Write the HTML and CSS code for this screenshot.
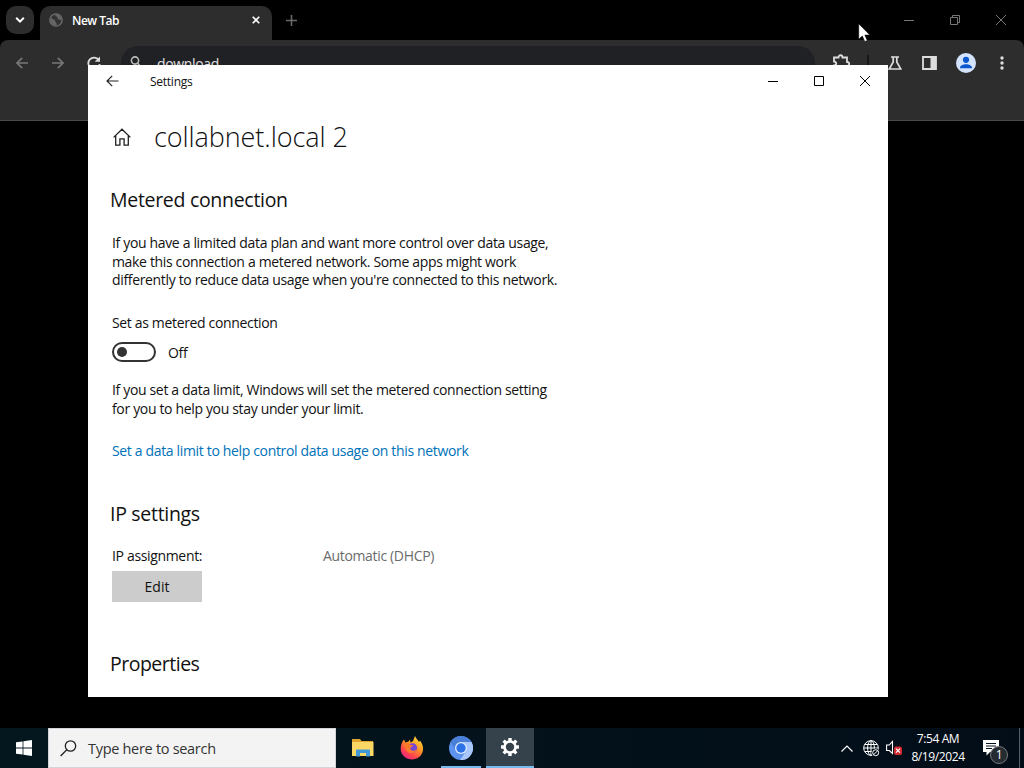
FILE: index.html
```
<!DOCTYPE html>
<html lang="en">
<head>
  <meta charset="UTF-8">
  <meta name="viewport" content="width=device-width, initial-scale=1.0">
  <title>Settings</title>
  <link rel="stylesheet" href="styles.css">
</head>
<body>
  <div class="desktop">

    <!-- browser -->
    <div class="browser">
      <div class="tabstrip">
        <div class="tab-search">
          <svg width="10" height="8" viewBox="0 0 10 8"><path d="M1.2 1.8 5 5.6 8.8 1.8" fill="none" stroke="#fff" stroke-width="2"/></svg>
        </div>
        <div class="tab">
          <svg width="14" height="14" viewBox="0 0 14 14"><circle cx="7" cy="7" r="6.2" fill="#333" stroke="#6e6e6e" stroke-width="1.3"/><path d="M2 4.5C4 7 6 6 6.2 8.3 6.3 9.5 8 9.6 7.8 12.6 5 13 2 11 1.3 7.5zM6 1.5c0 2 3 1.6 2.3 3.8C9.5 6 10.5 7.5 12.5 7 12.5 4 10.5 1.5 8 1.2z" fill="#666"/></svg>
          <span class="tab-title">New Tab</span>
          <svg class="tab-close" width="8" height="8" viewBox="0 0 8 8"><path d="M.7.7l6.6 6.6M7.3.7.7 7.3" stroke="#fff" stroke-width="1.6"/></svg>
        </div>
        <svg class="new-tab" width="11" height="11" viewBox="0 0 11 11"><path d="M5.5 0v11M0 5.5h11" stroke="#6a6a6a" stroke-width="1.6"/></svg>
        <div class="browser-controls">
          <svg width="10" height="10" viewBox="0 0 10 10"><path d="M0 5.5h10" stroke="#777"/></svg>
          <svg width="10" height="10" viewBox="0 0 10 10"><path d="M.5 2.5h7v7h-7zM2.5 2.5v-2h7v7h-2" fill="none" stroke="#777"/></svg>
          <svg width="10" height="10" viewBox="0 0 10 10"><path d="M0 0l10 10M10 0 0 10" stroke="#777"/></svg>
        </div>
      </div>
      <div class="toolbar">
        <svg width="12" height="12" viewBox="0 0 12 12"><path d="M12 6H1.2M6.2.8 1 6l5.2 5.2" fill="none" stroke="#777" stroke-width="1.7"/></svg>
        <svg width="12" height="12" viewBox="0 0 12 12"><path d="M0 6h10.8M5.8.8 11 6l-5.2 5.2" fill="none" stroke="#777" stroke-width="1.7"/></svg>
        <svg class="reload" width="14" height="14" viewBox="0 0 14 14"><path d="M12 4.5A5.7 5.7 0 1 0 12.7 8" fill="none" stroke="#ddd" stroke-width="1.8"/><path d="M13 .5v5.3H7.7z" fill="#ddd"/></svg>
        <div class="omnibox">
          <svg width="16" height="16" viewBox="0 0 16 16"><circle cx="8" cy="5.5" r="3.6" fill="none" stroke="#bbb" stroke-width="1.6"/><path d="M10.5 8l4 5" stroke="#bbb" stroke-width="1.6"/></svg>
          <span>download</span>
        </div>
        <div class="tools">
          <svg width="18" height="18" viewBox="0 0 18 18"><path d="M2 16v-4.500c3 0 3-4 0-4v-4h4.500c0-3 4-3 4 0H15v4.500c3 0 3 4 0 4V16z" fill="none" stroke="#ddd" stroke-width="1.8"/></svg>
          <span class="divider"></span>
          <svg class="labs" width="14" height="14" viewBox="0 0 14 14"><path d="M3 1h8M5.2 1v5l-4 7h11.600l-4-7V1" fill="none" stroke="#ddd" stroke-width="1.7"/></svg>
          <svg class="panel" width="15" height="14" viewBox="0 0 15 14"><path d="M1 1h13v12H1z" fill="none" stroke="#ddd" stroke-width="1.8"/><path d="M8.500 1H14v12H8.500z" fill="#ddd"/></svg>
          <svg class="profile" width="20" height="20" viewBox="0 0 20 20"><circle cx="10" cy="10" r="10" fill="#d3e3fd"/><circle cx="10" cy="6.800" r="3.100" fill="#0b57d0"/><path d="M4 14.800c0-4.800 12-4.800 12 0v.4H4z" fill="#0b57d0"/></svg>
          <svg class="more" width="4" height="16" viewBox="0 0 4 16"><circle cx="2" cy="3" r="1.700" fill="#ddd"/><circle cx="2" cy="8" r="1.700" fill="#ddd"/><circle cx="2" cy="13" r="1.700" fill="#ddd"/></svg>
        </div>
      </div>
    </div>

    <!-- settings window -->
    <div class="settings">
      <div class="titlebar">
        <svg width="13" height="12" viewBox="0 0 13 12"><path d="M12.500 6H1M6.200.8 1 6l5.200 5.200" fill="none" stroke="#222" stroke-width="1.200"/></svg>
        <span class="window-title">Settings</span>
        <div class="window-controls">
          <svg width="10" height="10" viewBox="0 0 10 10"><path d="M0 5.5h10" stroke="#000"/></svg>
          <svg width="10" height="10" viewBox="0 0 10 10"><path d="M.5.5h9v9h-9z" fill="none" stroke="#000"/></svg>
          <svg width="10" height="10" viewBox="0 0 10 10"><path d="M0 0l10 10M10 0 0 10" stroke="#000"/></svg>
        </div>
      </div>
      <div class="content">
        <div class="page-head">
          <svg width="18" height="18" viewBox="0 0 18 18"><path d="M.6 9.400 9 1.200l8.400 8.200M2.700 7.600v9.600h4.200v-6.400h4.200v6.400h4.200V7.600" fill="none" stroke="#222" stroke-width="1.300"/></svg>
          <h1>collabnet.local 2</h1>
        </div>

        <h2>Metered connection</h2>
        <p class="intro">If you have a limited data plan and want more control over data usage,<br>make this connection a metered network. Some apps might work<br>differently to reduce data usage when you're connected to this network.</p>
        <p class="label">Set as metered connection</p>
        <div class="toggle-row">
          <span class="toggle"></span>
          <span class="toggle-state">Off</span>
        </div>
        <p class="note">If you set a data limit, Windows will set the metered connection setting<br>for you to help you stay under your limit.</p>
        <a class="link" href="#">Set a data limit to help control data usage on this network</a>

        <h2 class="ip-title">IP settings</h2>
        <div class="ip-row">
          <span>IP assignment:</span>
          <span class="ip-value">Automatic (DHCP)</span>
        </div>
        <button class="btn">Edit</button>

        <h2 class="props-title">Properties</h2>
      </div>
    </div>

    <!-- taskbar -->
    <div class="taskbar">
      <div class="start">
        <svg width="16" height="16" viewBox="0 0 16 16"><path d="M0 2.300 6.600 1.400v6.200H0zM7.400 1.300 16 0v7.600H7.400zM0 8.400h6.600v6.200L0 13.700zM7.400 8.400H16V16l-8.600-1.300z" fill="#fff"/></svg>
      </div>
      <div class="search">
        <svg width="17" height="17" viewBox="0 0 17 17"><circle cx="10.500" cy="6" r="5.200" fill="none" stroke="#222" stroke-width="1.300"/><path d="M6.800 9.800.6 16" stroke="#222" stroke-width="1.300"/></svg>
        <span>Type here to search</span>
      </div>
      <div class="apps">
        <div class="app">
          <svg width="22" height="18" viewBox="0 0 22 18"><path d="M0 0h8l1.500 2H21v5H0z" fill="#e0a52c"/><path d="M0 3h21.500v14H0z" fill="#fbd866"/><path d="M4 17.500v-6q0-1 1-1h12q1 0 1 1v6h-4V14H8v3.500z" fill="#4199d8"/></svg>
        </div>
        <div class="app">
          <svg width="24" height="24" viewBox="0 0 24 24">
            <defs>
              <linearGradient id="fox" x1=".85" y1="0" x2=".2" y2="1"><stop offset="0" stop-color="#ffe443"/><stop offset=".4" stop-color="#ff9a23"/><stop offset=".75" stop-color="#ff4250"/><stop offset="1" stop-color="#e6208c"/></linearGradient>
            </defs>
            <path d="M2.500 5.500 4 3.500l1.500 3 3-1L10 3.500l.5 3L13 5l2-5c1 3 3 3.500 4 6l1-1.500c2 3 3.500 6 3 9.500-1 6-5.500 9.500-11 9.500S1 19.500.7 13.500C.6 10 1.500 8 2.500 5.500z" fill="url(#fox)"/>
            <circle cx="12.500" cy="12" r="4.700" fill="#7546d8"/>
            <path d="M4 8c2.500-1.500 5-.5 6.500 1l3 .3c-1 1.700-3 1.700-3.200 3C10 15 14 16 17 13c-1 4.500-9 5.500-11 1C5 12 5 10 4 8z" fill="#ff7a2a"/>
          </svg>
        </div>
        <div class="app running">
          <svg width="24" height="24" viewBox="0 0 24 24"><circle cx="12" cy="12" r="12" fill="#5b93ee"/><path d="M12 6h10.400A12 12 0 0 1 11 24l6.200-9z" fill="#a9c7fa"/><path d="M1.600 6A12 12 0 0 1 22.400 6H12a6 6 0 0 0-5.200 9z" fill="#4a80d8"/><circle cx="12" cy="12" r="6" fill="#dce9ff"/><circle cx="12" cy="12" r="4.700" fill="#2b72e6"/></svg>
        </div>
        <div class="app active">
          <svg width="20" height="20" viewBox="-10 -10 20 20"><g fill="#fff"><g id="teeth"><path d="M-1.700-9h3.400v18h-3.400z"/><path d="M-9-1.700h18v3.400H-9z"/></g><use href="#teeth" transform="rotate(45)"/><circle r="6.800"/></g><circle r="4.200" fill="#35424b"/></svg>
        </div>
      </div>
      <div class="tray">
        <svg width="12" height="7" viewBox="0 0 12 7"><path d="M.5 6.500 6 1l5.500 5.500" fill="none" stroke="#fff" stroke-width="1.200"/></svg>
        <svg class="network" width="17" height="17" viewBox="0 0 17 17"><g fill="none" stroke="#fff"><circle cx="8" cy="8" r="7.300"/><ellipse cx="8" cy="8" rx="3.400" ry="7.300"/><path d="M.7 8h14.600M8 .7v14.600M2 4.500h12M2 11.500h7"/></g><circle cx="12.700" cy="12.700" r="4.300" fill="#020d18"/><circle cx="12.700" cy="12.700" r="3" fill="none" stroke="#fff"/><path d="M10.700 14.700l4-4" stroke="#fff"/></svg>
        <svg class="volume" width="17" height="16" viewBox="0 0 17 16"><path d="M.6 5h2.700L6.500 1.500v12L3.300 10.500H.6z" fill="none" stroke="#fff" stroke-width="1.100"/><rect x="8" y="6.500" width="8" height="8.500" rx="2" fill="#d42b30"/><path d="M10 8.700l4 4M14 8.700l-4 4" stroke="#fff" stroke-width="1.200"/></svg>
        <div class="clock">
          <span>7:54 AM</span>
          <span>8/19/2024</span>
        </div>
        <div class="notify">
          <svg width="16" height="16" viewBox="0 0 16 16"><path d="M0 0h16v12H7l-3.500 3.500V12H0z" fill="#fff"/><path d="M3 3.500h10M3 6h10M3 8.500h6" stroke="#06121c"/></svg>
          <span class="badge">1</span>
        </div>
      </div>
    </div>

    <svg class="cursor" width="13" height="20" viewBox="0 0 13 20"><path d="M.7.7v15.600l3.600-3.300 2.500 5.700 2.500-1.100-2.400-5.500h5z" fill="#fff" stroke="#000" stroke-width=".6"/></svg>
  </div>
</body>
</html>
```
FILE: styles.css
```
* {
  box-sizing: border-box;
}
body {
  margin: 0;
  font-family: "Open Sans", "Noto Sans", sans-serif;
  font-size: 14px;
  letter-spacing: -0.34px;
  background: #000;
  color: #111;
}
svg {
  display: block;
  flex: none;
}
span, h1, h2, p, a {
  white-space: nowrap;
}
.desktop {
  position: relative;
  width: 1024px;
  height: 768px;
  overflow: hidden;
  display: flex;
  flex-direction: column;
  justify-content: space-between;
}

/* browser */
.browser {
  height: 121px;
  background: #000;
  border-bottom: 1px solid #4a4a4a;
}
.tabstrip {
  display: flex;
  align-items: center;
  height: 40px;
  padding-left: 6px;
}
.tab-search {
  display: flex;
  align-items: center;
  justify-content: center;
  width: 28px;
  height: 28px;
  border-radius: 10px;
  background: #2d2d2d;
}
.tab {
  display: flex;
  align-items: center;
  align-self: flex-end;
  width: 232px;
  height: 34px;
  margin-left: 6px;
  padding: 0 12px 6px 9px;
  border-radius: 10px 10px 0 0;
  background: #2d2d2d;
}
.tab-title {
  margin-left: 9px;
  font-size: 12px;
  font-weight: 600;
  letter-spacing: -0.5px;
  color: #fff;
}
.tab-close {
  margin-left: auto;
}
.new-tab {
  margin-left: 14px;
}
.browser-controls {
  display: flex;
  gap: 36px;
  margin-left: auto;
  padding-right: 18px;
}
.toolbar {
  display: flex;
  align-items: center;
  height: 80px;
  padding: 0 20px 34px 16px;
  border-radius: 8px 8px 0 0;
  background: #2d2d2d;
}
.toolbar > svg {
  margin-right: 24px;
}
.toolbar > .reload {
  margin: 0 20px 0 -1px;
}
.omnibox {
  display: flex;
  align-items: center;
  width: 694px;
  height: 34px;
  padding-left: 6px;
  border-radius: 17px;
  background: #202124;
  color: #e3e3e3;
}
.omnibox span {
  margin-left: 14px;
}
.tools {
  display: flex;
  align-items: center;
  width: 172px;
  margin-left: auto;
}
.divider {
  width: 2px;
  height: 16px;
  margin-left: 17px;
  background: #161616;
}
.labs {
  margin-left: 19px;
}
.panel {
  margin-left: 20px;
}
.profile {
  margin-left: 19px;
}
.more {
  margin-left: auto;
}

/* settings window */
.settings {
  position: absolute;
  left: 88px;
  top: 65px;
  width: 800px;
  height: 632px;
  overflow: hidden;
  background: #fff;
}
.titlebar {
  display: flex;
  align-items: center;
  height: 32px;
  padding-left: 18px;
}
.window-title {
  margin-left: 31px;
  font-size: 12px;
  letter-spacing: -0.25px;
}
.window-controls {
  display: flex;
  gap: 36px;
  margin-left: auto;
  padding-right: 18px;
}
.content {
  padding: 20px 24px 0;
  line-height: 18.5px;
}
.page-head {
  display: flex;
  align-items: center;
  height: 40px;
  padding-left: 1px;
}
h1 {
  margin: 0 0 0 23px;
  font-size: 27px;
  font-weight: 340;
  line-height: 40px;
  letter-spacing: -0.08px;
}
h2 {
  margin: 29px 0 0 -2px;
  font-size: 19.5px;
  font-weight: 400;
  line-height: 28px;
  letter-spacing: -0.3px;
}
p {
  margin: 0;
}
.intro {
  margin-top: 20px;
}
.label {
  margin-top: 24px;
}
.toggle-row {
  display: flex;
  align-items: center;
  gap: 12px;
  height: 20px;
  margin-top: 10px;
}
.toggle {
  width: 44px;
  height: 20px;
  padding: 3px;
  border: 2px solid #333;
  border-radius: 10px;
}
.toggle::before {
  content: "";
  display: block;
  width: 10px;
  height: 10px;
  border-radius: 50%;
  background: #333;
}
.toggle-state {
  padding-top: 2px;
}
.note {
  margin-top: 19px;
}
.link {
  display: block;
  margin-top: 24px;
  color: #0072b8;
  text-decoration: none;
}
.ip-title {
  margin-top: 39px;
}
.ip-row {
  display: grid;
  grid-template-columns: 211px auto;
  margin-top: 19px;
}
.ip-value {
  color: #6b6b6b;
}
.btn {
  display: block;
  width: 90px;
  height: 31px;
  margin-top: 6px;
  padding: 1px 0 0;
  border: none;
  background: #ccc;
  color: #111;
  font: inherit;
}
.props-title {
  margin-top: 48px;
  letter-spacing: -0.5px;
}

/* taskbar */
.taskbar {
  display: flex;
  height: 40px;
  background: linear-gradient(90deg, #04171f, #020d18);
  color: #fff;
}
.start {
  display: flex;
  align-items: center;
  justify-content: center;
  width: 48px;
}
.search {
  display: flex;
  align-items: center;
  gap: 11px;
  width: 288px;
  padding-left: 11px;
  border: 1px solid #d0d4d8;
  background: #f3f3f3;
  color: #333;
  font-size: 14.5px;
  letter-spacing: -0.3px;
}
.apps {
  display: flex;
  gap: 1px;
  margin-left: 3px;
}
.app {
  display: flex;
  align-items: center;
  justify-content: center;
  width: 48px;
}
.running {
  background: linear-gradient(#76b9ed, #76b9ed) center bottom / 40px 2px no-repeat;
}
.active {
  background: #35424b;
  border-bottom: 2px solid #76b9ed;
}
.tray {
  display: flex;
  align-items: center;
  margin-left: auto;
  padding-right: 4px;
}
.network {
  margin-left: 10px;
}
.volume {
  margin-left: 6px;
}
.clock {
  display: flex;
  flex-direction: column;
  align-items: center;
  width: 72px;
  padding-right: 2px;
  font-size: 12px;
  line-height: 18px;
  letter-spacing: -0.4px;
}
.notify {
  position: relative;
  display: flex;
  align-items: center;
  width: 45px;
  height: 40px;
  padding-left: 8px;
  border-right: 1px solid #56616a;
}
.badge {
  position: absolute;
  left: 15px;
  top: 18px;
  width: 18px;
  height: 18px;
  border: 1px solid #777;
  border-radius: 50%;
  background: #242b31;
  font-size: 12px;
  line-height: 16px;
  text-align: center;
}

.cursor {
  position: absolute;
  left: 858px;
  top: 23px;
}
```
